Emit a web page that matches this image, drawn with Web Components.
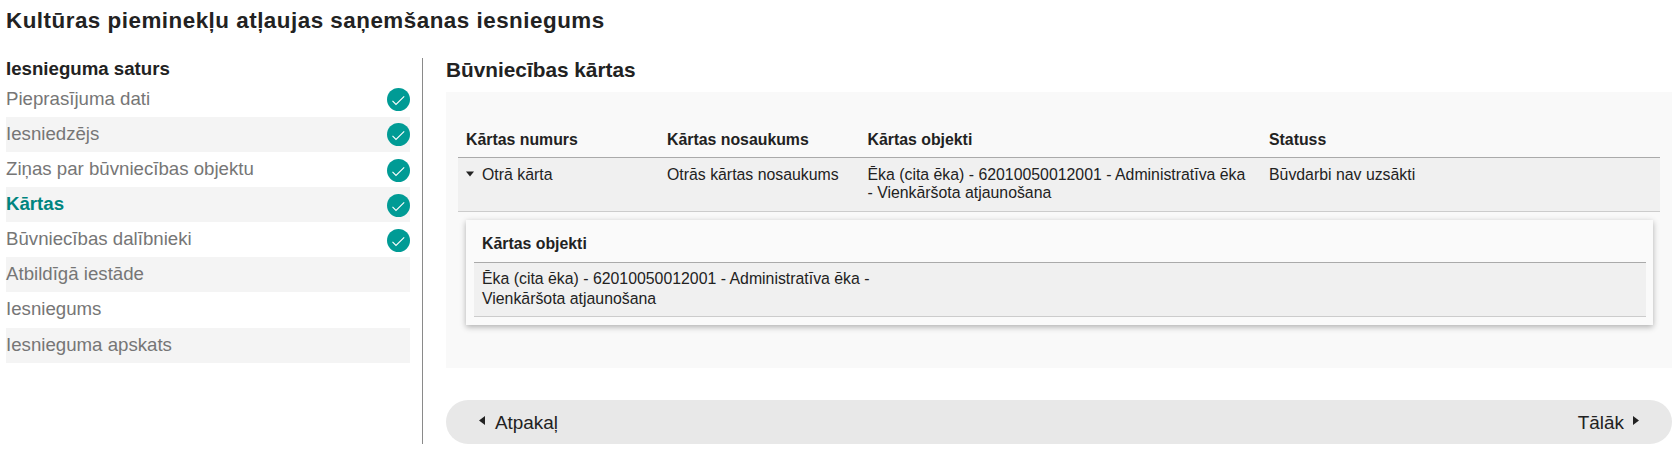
<!DOCTYPE html>
<html lang="lv"><head><meta charset="utf-8"><title>Iesniegums</title>
<style>
html,body{margin:0;padding:0;background:#fff}
body{font-family:"Liberation Sans",Arial,sans-serif;color:#222;width:1678px;height:449px;overflow:hidden}
</style></head><body>
<app-page>
  <span slot="title">Kultūras pieminekļu atļaujas saņemšanas iesniegums</span>
  <side-nav slot="side" heading="Iesnieguma saturs">
    <nav-item done>Pieprasījuma dati</nav-item>
    <nav-item done alt>Iesniedzējs</nav-item>
    <nav-item done>Ziņas par būvniecības objektu</nav-item>
    <nav-item done alt active>Kārtas</nav-item>
    <nav-item done>Būvniecības dalībnieki</nav-item>
    <nav-item alt>Atbildīgā iestāde</nav-item>
    <nav-item>Iesniegums</nav-item>
    <nav-item alt>Iesnieguma apskats</nav-item>
  </side-nav>
  <stage-panel slot="main" heading="Būvniecības kārtas">
    <stage-table>
      <stage-row head><span>Kārtas numurs</span><span>Kārtas nosaukums</span><span>Kārtas objekti</span><span>Statuss</span></stage-row>
      <stage-row><span><caret-icon></caret-icon>Otrā kārta</span><span>Otrās kārtas nosaukums</span><span>Ēka (cita ēka) - 62010050012001 - Administratīva ēka - Vienkāršota atjaunošana</span><span>Būvdarbi nav uzsākti</span></stage-row>
    </stage-table>
    <detail-card heading="Kārtas objekti">Ēka (cita ēka) - 62010050012001 - Administratīva ēka - Vienkāršota atjaunošana</detail-card>
  </stage-panel>
  <pager-bar slot="main"><span slot="prev">Atpakaļ</span><span slot="next">Tālāk</span></pager-bar>
</app-page>
<script>
function def(name, css, html){
  customElements.define(name, class extends HTMLElement{
    connectedCallback(){
      if(this.shadowRoot) return;
      const r=this.attachShadow({mode:'open'});
      r.innerHTML='<style>'+css+'</style>'+(typeof html==='function'?html(this):html);
    }
  });
}
def('app-page',`
:host{display:block;padding:0 6px;height:449px;box-sizing:border-box}
h1{margin:0;font-size:22.4px;line-height:24px;font-weight:700;letter-spacing:.5px;padding-top:9px;height:25px;color:#222}
.cols{display:grid;grid-template-columns:404px 1fr;margin-top:24px;height:386px}
.main{margin-left:12px;border-left:1px solid #8a8a8a;padding-left:23px;display:flex;flex-direction:column}
`,`<h1><slot name="title"></slot></h1><div class="cols"><div><slot name="side"></slot></div><div class="main"><slot name="main"></slot></div></div>`);
def('side-nav',`
:host{display:block}
h2{margin:0;font-size:18.67px;line-height:21.85px;height:23.85px;font-weight:700;color:#222}
`,h=>`<h2>${h.getAttribute('heading')}</h2><slot></slot>`);
def('nav-item',`
:host{display:flex;align-items:center;justify-content:space-between;height:35.1px;font-size:18.67px;color:#767676}
:host([alt]){background:#f4f4f4}
:host([active]){color:#00857f;font-weight:700}
span{display:block;padding-bottom:1px}
svg{display:block;flex:none;margin-top:1px}
`,h=>`<span><slot></slot></span>`+(h.hasAttribute('done')?`<svg width="23" height="23" viewBox="0 0 23 23"><circle cx="11.5" cy="11.5" r="11.5" fill="#009b95"/><path d="M5.5 12.8 9 16.4 17.2 8.4" fill="none" stroke="#fff" stroke-width="1.1"/></svg>`:''));
def('stage-panel',`
:host{display:block}
h2{margin:0;font-size:20.8px;line-height:23px;font-weight:700;color:#222;height:34px}
.box{background:#f9f9f9;height:276px;box-sizing:border-box;padding:41px 12px 0 12px}
`,h=>`<h2>${h.getAttribute('heading')}</h2><div class="box"><slot></slot></div>`);
def('stage-table',`:host{display:block}`,`<slot></slot>`);
def('stage-row',`
:host{display:grid;grid-template-columns:201px 200.5px 401.5px 1fr;padding-left:8px;box-sizing:border-box;font-size:15.85px;line-height:18px;background:#f0f0f0;border-bottom:1px solid #ccc;height:54px;padding-top:8px;color:#222}
:host([head]){background:transparent;border-bottom:1px solid #aaa;font-weight:700;height:27px;padding-top:0;margin-top:-2px;color:#222}
::slotted(span){display:block;padding-right:18px}
`,`<slot></slot>`);
def('caret-icon',`
:host{display:inline-block;width:16px;height:10px;vertical-align:1px}
svg{display:block}
`,`<svg width="8" height="10" viewBox="0 0 8 10"><path d="M0 2.5H8L4 7.5Z" fill="#222"/></svg>`);
def('detail-card',`
:host{display:block;margin:8px 7px 0 8px;height:105px;background:#fafafa;box-shadow:0 2px 6px rgba(0,0,0,.3);box-sizing:border-box;padding:0 7px 0 8px;color:#222;font-size:15.85px}
h3{margin:0;font-size:15.85px;line-height:18px;font-weight:700;padding:15px 0 0 8px;height:27px}
.row{border-top:1px solid #aaa;border-bottom:1px solid #ccc;background:#f0f0f0;height:55px;box-sizing:border-box;line-height:20px;padding:6px 0 0 8px}
.row div{width:410px}
`,h=>`<h3>${h.getAttribute('heading')}</h3><div class="row"><div><slot></slot></div></div>`);
def('pager-bar',`
:host{display:flex;align-items:center;justify-content:space-between;box-sizing:border-box;height:44px;margin-top:32px;background:#e8e8e8;border-radius:22px;padding:2px 33px 0;font-size:18.9px;color:#222}
.l,.r{display:flex;align-items:center}
svg{display:block;flex:none;margin-top:-5px}
.l svg{margin-right:10px}.r svg{margin-left:9px}
`,`<div class="l"><svg width="6" height="9" viewBox="0 0 6 9"><path d="M6 0V9L0 4.5Z" fill="#222"/></svg><slot name="prev"></slot></div><div class="r"><slot name="next"></slot><svg width="6" height="9" viewBox="0 0 6 9"><path d="M0 0V9L6 4.5Z" fill="#222"/></svg></div>`);
</script>
</body></html>
